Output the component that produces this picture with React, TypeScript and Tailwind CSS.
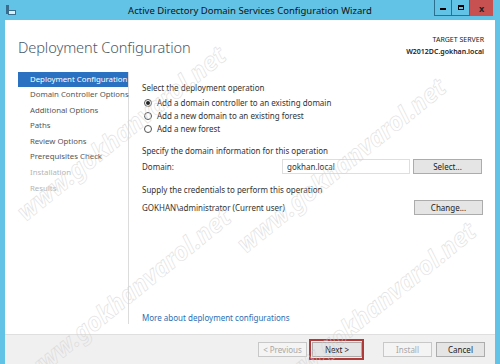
import React from "react";

const WM = ({ x, y }: { x: number; y: number }) => (
  <div
    className="absolute pointer-events-none whitespace-nowrap text-[25px] font-bold italic text-transparent [-webkit-text-stroke:0.6px_#d2d2d2] opacity-70 origin-left"
    style={{ left: x, top: y, transform: "rotate(-39deg)" }}
  >
    www.gokhanvarol.net
  </div>
);

const Btn = ({ label, disabled, w = 49 }: { label: string; disabled?: boolean; w?: number }) => (
  <div
    className={`h-[15px] flex items-center justify-center border text-[8px] ${
      disabled ? "border-[#c8c8c8] bg-[#f4f4f4] text-[#a8a8a8]" : "border-[#acacac] bg-[#e5e5e5] text-[#222]"
    }`}
    style={{ width: w }}
  >
    {label}
  </div>
);

const Radio = ({ checked, label }: { checked?: boolean; label: string }) => (
  <div className="flex items-center gap-[5px] h-[13px]">
    <div className="w-[8px] h-[8px] rounded-full border border-[#555] bg-white flex items-center justify-center">
      {checked && <div className="w-[4px] h-[4px] rounded-full bg-[#222]" />}
    </div>
    <span>{label}</span>
  </div>
);

export default function App() {
  const nav = [
    "Domain Controller Options",
    "Additional Options",
    "Paths",
    "Review Options",
    "Prerequisites Check",
  ];
  return (
    <div
      className="relative w-[500px] h-[364px] bg-[#63c3e6] overflow-hidden flex flex-col text-[#333]"
      style={{ fontFamily: "'Noto Sans', 'Open Sans', sans-serif" }}
    >
      {/* Title bar */}
      <div className="relative h-[20px] flex items-center shrink-0">
        <div className="ml-[6px] w-[10px] h-[11px] relative">
          <div className="absolute left-0 top-0 w-[3px] h-[9px] bg-[#3a6e8e]" />
          <div className="absolute left-[2px] top-[5px] w-[8px] h-[5px] border border-[#3a6e8e] bg-[#d8eef8]" />
        </div>
        <div className="absolute left-0 right-0 top-[4px] text-center text-[9.5px] text-[#111]">
          Active Directory Domain Services Configuration Wizard
        </div>
        <div className="absolute right-[7px] top-0 flex h-[16px]">
          <div className="w-[18px] border border-[#2d6f8f] border-t-0 flex items-center justify-center">
            <div className="w-[6px] h-[2px] bg-black mt-[3px]" />
          </div>
          <div className="w-[18px] border-b border-r border-[#2d6f8f] flex items-center justify-center">
            <div className="w-[6px] h-[5px] border border-black border-t-2" />
          </div>
          <div className="w-[23px] bg-[#c75050] flex items-center justify-center text-[9px] font-bold text-[#222] leading-none">
            x
          </div>
        </div>
      </div>

      {/* Main */}
      <div className="flex-1 mx-[5px] bg-white flex flex-col min-h-0">
        <div className="h-[52px] shrink-0 flex justify-between pl-[13px] pr-[11px]">
          <div className="text-[14.6px] font-light text-[#4b5a66] mt-[17px] tracking-[-0.1px] whitespace-nowrap">
            Deployment Configuration
          </div>
          <div className="mt-[14px] text-right text-[7px] leading-[12px] text-[#222] whitespace-nowrap">
            <div>TARGET SERVER</div>
            <div className="font-semibold">W2012DC.gokhan.local</div>
          </div>
        </div>
        <div className="flex-1 flex min-h-0">
          <div className="w-[124px] shrink-0 border-r border-[#dcdcdc] pl-[13px] text-[7.8px] mb-[10px]">
            <div className="bg-[#2b71c2] text-white h-[15px] flex items-center pl-[12px] whitespace-nowrap">
              Deployment Configuration
            </div>
            {nav.map((n) => (
              <div key={n} className="h-[15.6px] flex items-center pl-[12px] text-[#555] whitespace-nowrap">
                {n}
              </div>
            ))}
            <div className="h-[15.6px] flex items-center pl-[12px] text-[#b5b5b5]">Installation</div>
            <div className="h-[15.6px] flex items-center pl-[12px] text-[#b5b5b5]">Results</div>
          </div>
          <div className="flex-1 pl-[13px] pr-[12px] text-[8px] text-[#333] flex flex-col">
            <div className="mt-[10px]">Select the deployment operation</div>
            <div className="mt-[2px] pl-[2px]">
              <Radio checked label="Add a domain controller to an existing domain" />
              <Radio label="Add a new domain to an existing forest" />
              <Radio label="Add a new forest" />
            </div>
            <div className="mt-[10px]">Specify the domain information for this operation</div>
            <div className="mt-[2px] flex items-center h-[15px]">
              <span className="w-[140px]">Domain:</span>
              <div className="w-[128px] h-[15px] border border-[#dedede] flex items-center pl-[4px] text-[#333]">
                gokhan.local
              </div>
              <div className="ml-[3px]">
                <Btn label="Select..." w={69} />
              </div>
            </div>
            <div className="mt-[10px]">Supply the credentials to perform this operation</div>
            <div className="mt-[4px] flex items-center justify-between h-[15px]">
              <span>GOKHAN\administrator (Current user)</span>
              <Btn label="Change..." w={69} />
            </div>
            <div className="flex-1" />
            <div className="text-[#2a6fb5] mb-[10px]">More about deployment configurations</div>
          </div>
        </div>
        <div className="h-[30px] shrink-0 bg-[#f0f0f0] border-t border-[#dfdfdf] flex items-center justify-end pr-[10px]">
          <Btn label="< Previous" disabled />
          <div className="ml-[2px] border-2 border-[#b03a3a] pl-[1px] pr-[0px] py-[1px]">
            <Btn label="Next >" w={50} />
          </div>
          <div className="ml-[19px]">
            <Btn label="Install" disabled />
          </div>
          <div className="ml-[4px]">
            <Btn label="Cancel" />
          </div>
        </div>
      </div>

      {/* watermarks */}
      <WM x={20} y={196} />
      <WM x={240} y={228} />
      <WM x={25} y={358} />
      <WM x={270} y={372} />
    </div>
  );
}
